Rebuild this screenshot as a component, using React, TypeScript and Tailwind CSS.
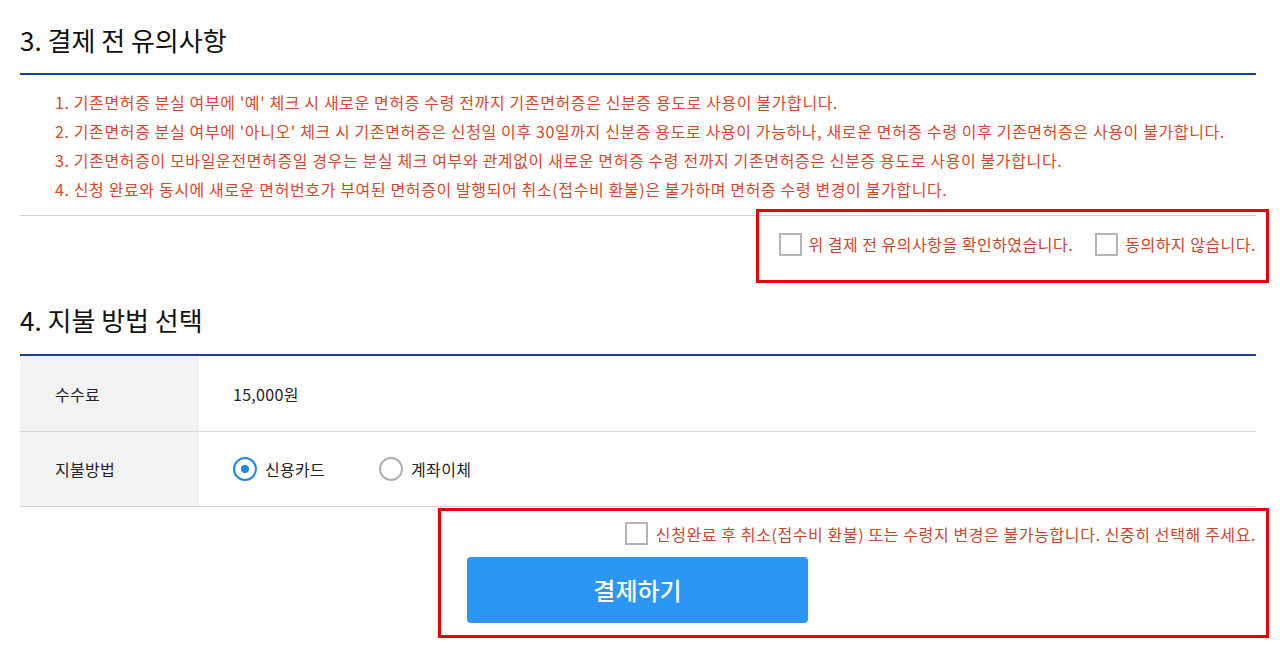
import { useState } from 'react';

const notices = [
  "1. 기존면허증 분실 여부에 '예' 체크 시 새로운 면허증 수령 전까지 기존면허증은 신분증 용도로 사용이 불가합니다.",
  "2. 기존면허증 분실 여부에 '아니오' 체크 시 기존면허증은 신청일 이후 30일까지 신분증 용도로 사용이 가능하나, 새로운 면허증 수령 이후 기존면허증은 사용이 불가합니다.",
  '3. 기존면허증이 모바일운전면허증일 경우는 분실 체크 여부와 관계없이 새로운 면허증 수령 전까지 기존면허증은 신분증 용도로 사용이 불가합니다.',
  '4. 신청 완료와 동시에 새로운 면허번호가 부여된 면허증이 발행되어 취소(접수비 환불)은 불가하며 면허증 수령 변경이 불가합니다.',
];

function Box() {
  return <span className="inline-block size-[23px] shrink-0 border-2 border-[#b5b5b5] bg-white" />;
}

function Radio({ checked }: { checked: boolean }) {
  return (
    <span
      className={`grid size-[24px] shrink-0 place-items-center rounded-full border-2 bg-white ${
        checked ? 'border-[#1e88e5]' : 'border-[#b0b0b0]'
      }`}
    >
      {checked && <span className="size-[8px] rounded-full bg-[#1e88e5]" />}
    </span>
  );
}

export default function App() {
  const [method, setMethod] = useState<'card' | 'bank'>('card');

  return (
    <div
      className="relative min-h-[654px] w-[1280px] bg-white text-[#222]"
      style={{ fontFamily: '"Noto Sans CJK KR", "Noto Sans", sans-serif' }}
    >
      <div className="ml-[20px] w-[1236px] pt-[23px]">
        {/* 3. 결제 전 유의사항 */}
        <h2 className="text-[26px] font-normal leading-[34px] text-[#111]">3. 결제 전 유의사항</h2>
        <div className="mt-[16px] h-[2px] bg-[#1b3f98]" />
        <ul className="border-b border-[#cfcfcf] pb-[11px] pl-[35px] pt-[13px] text-[16px] leading-[29px] tracking-[0.62px] text-[#d8472c]">
          {notices.map((n) => (
            <li key={n}>{n}</li>
          ))}
        </ul>
        <div className="flex h-[56px] items-center justify-end text-[16px] tracking-[0.5px] text-[#c9452d]">
          <label className="flex items-center gap-[6px]">
            <Box />
            <span>위 결제 전 유의사항을 확인하였습니다.</span>
          </label>
          <label className="ml-[22px] flex items-center gap-[7px]">
            <Box />
            <span>동의하지 않습니다.</span>
          </label>
        </div>

        {/* 4. 지불 방법 선택 */}
        <h2 className="mt-[31px] text-[26px] font-normal leading-[34px] text-[#111]">4. 지불 방법 선택</h2>
        <div className="mt-[17px] h-[2px] bg-[#1b3f98]" />
        <div className="text-[16px] tracking-[0.3px]">
          <div className="flex h-[76px] border-b border-[#d6d6d6]">
            <div className="flex w-[179px] items-center bg-[#f2f2f2] pl-[35px]">수수료</div>
            <div className="flex items-center pl-[34px]">15,000원</div>
          </div>
          <div className="flex h-[75px] border-b border-[#d6d6d6]">
            <div className="flex w-[179px] items-center bg-[#f2f2f2] pl-[35px]">지불방법</div>
            <div className="flex items-center pl-[34px]">
              <label className="flex cursor-pointer items-center gap-[8px]" onClick={() => setMethod('card')}>
                <Radio checked={method === 'card'} />
                <span>신용카드</span>
              </label>
              <label className="ml-[54px] flex cursor-pointer items-center gap-[8px]" onClick={() => setMethod('bank')}>
                <Radio checked={method === 'bank'} />
                <span>계좌이체</span>
              </label>
            </div>
          </div>
        </div>

        <div className="flex h-[50px] items-center justify-end gap-[8px] pt-[3px] text-[16px] tracking-[0.6px] text-[#c9452d]">
          <Box />
          <span>신청완료 후 취소(접수비 환불) 또는 수령지 변경은 불가능합니다. 신중히 선택해 주세요.</span>
        </div>
        <div className="flex pl-[447px]">
          <button
            type="button"
            className="h-[66px] w-[341px] rounded-[4px] bg-[#2c96f4] text-[24px] font-medium text-white"
          >
            결제하기
          </button>
        </div>
      </div>

      {/* annotation boxes */}
      <div className="pointer-events-none absolute left-[756px] top-[209px] h-[74px] w-[513px] border-[3px] border-[#e8000b]" />
      <div className="pointer-events-none absolute left-[438px] top-[508px] h-[130px] w-[831px] border-[3px] border-[#e8000b]" />
    </div>
  );
}
